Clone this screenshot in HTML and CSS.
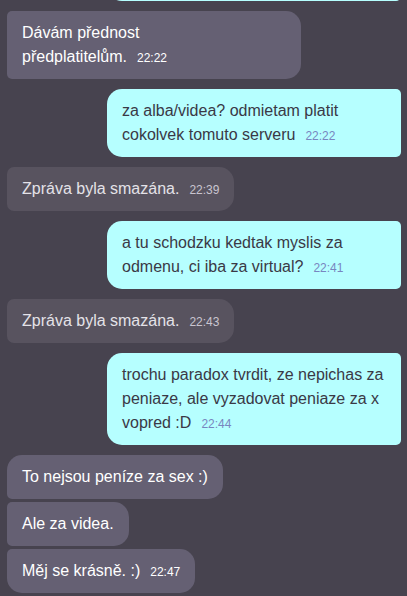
FILE: index.html
```html
<!DOCTYPE html>
<html lang="cs">
<head>
<meta charset="utf-8">
<title>Chat</title>
<link rel="stylesheet" href="styles.css">
</head>
<body>
<div class="chat">
  <div class="msg out prev"><div class="bubble filler"></div></div>

  <div class="msg in"><div class="bubble b-first">Dávám přednost předplatitelům.<span class="time">22:22</span></div></div>

  <div class="msg out"><div class="bubble">za alba/videa? odmietam platit cokolvek tomuto serveru<span class="time">22:22</span></div></div>

  <div class="msg in"><div class="bubble deleted">Zpráva byla smazána.<span class="time">22:39</span></div></div>

  <div class="msg out"><div class="bubble">a tu schodzku kedtak myslis za odmenu, ci iba za virtual?<span class="time">22:41</span></div></div>

  <div class="msg in"><div class="bubble deleted">Zpráva byla smazána.<span class="time">22:43</span></div></div>

  <div class="msg out"><div class="bubble">trochu paradox tvrdit, ze nepichas za peniaze, ale vyzadovat peniaze za x vopred :D<span class="time">22:44</span></div></div>

  <div class="msg in"><div class="bubble g-top">To nejsou peníze za sex :)</div></div>
  <div class="msg in grouped"><div class="bubble g-mid">Ale za videa.</div></div>
  <div class="msg in grouped"><div class="bubble g-bot">Měj se krásně. :)<span class="time">22:47</span></div></div>
</div>
</body>
</html>
```
FILE: styles.css
```css
html, body {
  margin: 0;
  padding: 0;
  background: #47434f;
}
body {
  font-family: "Liberation Sans", Arial, sans-serif;
  font-size: 16px;
  overflow: hidden;
}
.chat {
  display: flex;
  flex-direction: column;
  padding: 0 6px 0 7px;
  margin-top: -67px;
}
.msg {
  display: flex;
  margin-top: 10px;
}
.msg.prev {
  margin-top: 0;
}
.msg.grouped {
  margin-top: 3px;
}
.msg.in {
  justify-content: flex-start;
}
.msg.out {
  justify-content: flex-end;
}
.bubble {
  max-width: 294px;
  box-sizing: border-box;
  padding: 10px 15px;
  line-height: 24px;
}
.bubble.filler {
  width: 294px;
  height: 68px;
}
.in .bubble {
  background: #656073;
  color: #ffffff;
  border-radius: 5px 15px 15px 5px;
}
.in .bubble.deleted {
  background: #58535f;
  color: #e4e2e8;
  border-radius: 7px 15px 15px 7px;
}
.in .bubble.g-top {
  border-radius: 15px 15px 15px 5px;
}
.in .bubble.g-mid {
  border-radius: 5px 15px 15px 5px;
}
.in .bubble.g-bot {
  border-radius: 5px 15px 15px 15px;
}
.out .bubble {
  background: #b6ffff;
  color: #3a3946;
  border-radius: 15px 5px 5px 15px;
}
.time {
  font-size: 12px;
  line-height: 1;
  margin-left: 10px;
  white-space: nowrap;
}
.in .time {
  color: #ffffff;
}
.in .deleted .time {
  color: #c9c5cf;
}
.out .time {
  color: #7886c0;
}
```
